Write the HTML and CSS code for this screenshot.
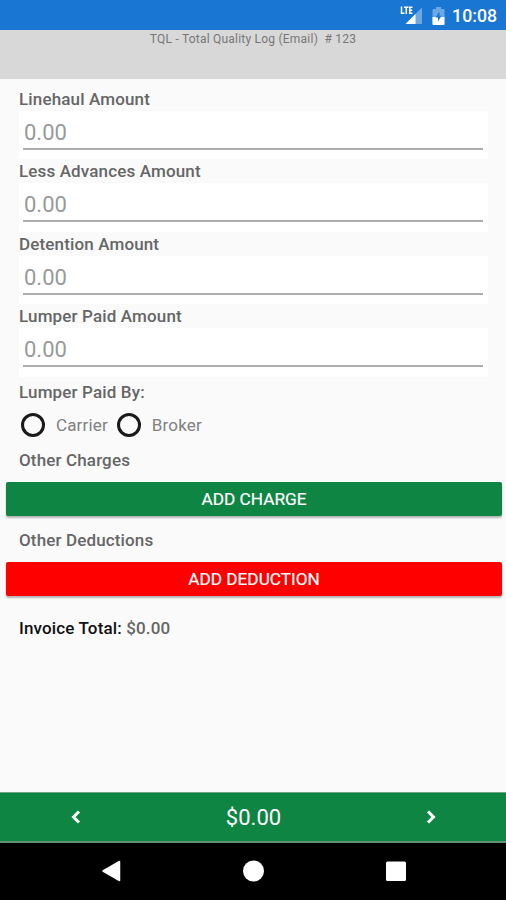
FILE: index.html
```html
<!DOCTYPE html>
<html lang="en">
<head>
<meta charset="utf-8">
<title>Invoice</title>
<link rel="stylesheet" href="styles.css">
</head>
<body>
<div class="screen">
  <div class="status">
    <svg class="signal" width="23" height="20" viewBox="0 0 23 20">
      <path d="M22 2.500V19H5.500Z" fill="#6ca8e4"/><path d="M15.500 9V19H5.500Z" fill="#fff"/>
      <path d="M1.500 1.500V8.200H4.500M4 2.200H8.500M6.300 2V9M12.500 2.200H9.800V8.200H12.500M9.800 5.200H12.200" fill="none" stroke="#fff" stroke-width="1.500"/>
    </svg>
    <svg class="battery" width="13" height="18" viewBox="0 0 13 18">
      <path d="M4 0H9V2H11.500Q12.500 2 12.500 3V17Q12.500 18 11.500 18H1.500Q.5 18 .5 17V3Q.5 2 1.500 2H4Z" fill="#6ca8e4"/>
      <path d="M.5 10H12.500V17Q12.500 18 11.500 18H1.500Q.5 18 .5 17Z" fill="#fff"/>
      <path d="M7.500 4.500L3.500 10.500H6V14.500L9.500 8.700H7.500Z" fill="#1976d2"/>
    </svg>
    <span class="clock">10:08</span>
  </div>
  <header class="header"><span>TQL - Total Quality Log (Email)&nbsp; # 123</span></header>
  <main class="form">
    <div class="field"><label class="label">Linehaul Amount</label><div class="input"><span>0.00</span></div></div>
    <div class="field"><label class="label">Less Advances Amount</label><div class="input"><span>0.00</span></div></div>
    <div class="field"><label class="label">Detention Amount</label><div class="input"><span>0.00</span></div></div>
    <div class="field"><label class="label">Lumper Paid Amount</label><div class="input"><span>0.00</span></div></div>
    <div class="label paid">Lumper Paid By:</div>
    <div class="radios">
      <span class="radio"><i class="ring"></i>Carrier</span>
      <span class="radio"><i class="ring"></i>Broker</span>
    </div>
    <div class="label charges">Other Charges</div>
    <div class="button green"><span>ADD CHARGE</span></div>
    <div class="label deductions">Other Deductions</div>
    <div class="button red"><span>ADD DEDUCTION</span></div>
    <div class="label total"><b>Invoice Total:</b> $0.00</div>
  </main>
  <footer class="summary">
    <svg width="10" height="14" viewBox="0 0 10 14"><path d="M8 1.500L2.500 7L8 12.500" fill="none" stroke="#fff" stroke-width="3"/></svg>
    <span class="amount">$0.00</span>
    <svg width="10" height="14" viewBox="0 0 10 14"><path d="M2 1.500L7.500 7L2 12.500" fill="none" stroke="#fff" stroke-width="3"/></svg>
  </footer>
  <nav class="nav">
    <svg width="20" height="22" viewBox="0 0 20 22"><path d="M18.500 1.500V20.500L2 11Z" fill="#fff" stroke="#fff" stroke-width="1.500" stroke-linejoin="round"/></svg>
    <svg width="22" height="22" viewBox="0 0 22 22"><circle cx="10.500" cy="11" r="10.500" fill="#fff"/></svg>
    <svg width="20" height="22" viewBox="0 0 20 22"><rect y="1.500" width="20" height="19.500" rx="1.500" fill="#fff"/></svg>
  </nav>
</div>
</body>
</html>
```
FILE: styles.css
```css
* { box-sizing: border-box; }
body { margin: 0; font-family: Roboto, "Liberation Sans", sans-serif; background: #fafafa; }
svg { display: block; flex: none; }
.screen { width: 506px; height: 900px; display: flex; flex-direction: column; overflow: hidden; }
.status { height: 30px; flex: none; background: #1976d2; color: #fff; display: flex; align-items: center; justify-content: flex-end; padding-right: 9px; }
.signal { margin-right: 9px; }
.battery { margin: 1px 7px 0 0; }
.clock { font-size: 17.7px; font-weight: 500; line-height: 30px; padding-top: 2px; }
.header { height: 49px; flex: none; background: #d8d8d8; text-align: center; font-size: 12px; letter-spacing: .22px; line-height: 18px; color: #777; }
.form { flex: 1; padding-top: 8px; }
.field { height: 72.4px; padding: 0 18px 0 19px; }
.label { font-size: 17px; font-weight: 500; letter-spacing: .14px; line-height: 24px; color: #666; white-space: nowrap; }
.field .label { display: block; height: 24px; }
.input { height: 48.4px; background: #fff; padding: 0 5px 9px 4px; }
.input span { display: block; height: 39px; border-bottom: 2px solid #adadad; padding-left: 1px; font-size: 22px; line-height: 43px; color: #999; }
.paid { margin: 3.4px 19px 0; }
.radios { display: flex; height: 42px; align-items: center; padding-left: 21px; gap: 9px; font-size: 17px; letter-spacing: .15px; color: #808080; }
.radio { display: flex; align-items: center; gap: 11px; }
.ring { width: 24px; height: 24px; border: 3px solid #1a1a1a; border-radius: 50%; }
.charges { margin: 2px 19px 0; }
.button { height: 34px; margin: 10px 4px 0 6px; border-radius: 2px; display: flex; align-items: center; justify-content: center; color: #fff; font-size: 17.2px; box-shadow: 0 2px 2px rgba(0,0,0,.28); -webkit-text-stroke: .2px #fff; padding-top: 1px; }
.green { background: #0e8543; }
.red { background: #f00; }
.deductions { margin: 12px 19px 0; }
.total { margin: 20px 19px 0; }
.total b { font-weight: 500; color: #111; }
.summary { height: 51px; flex: none; background: #0e8543; border-top: 1px solid #6ba782; border-bottom: 2px solid #658f73; color: #fff; display: flex; justify-content: space-between; align-items: center; padding: 0 70px 0 71px; }
.amount { font-size: 22px; padding-top: 1px; }
.nav { height: 57px; flex: none; background: #000; display: flex; justify-content: space-between; padding: 17px 100px 0 101px; }
```
